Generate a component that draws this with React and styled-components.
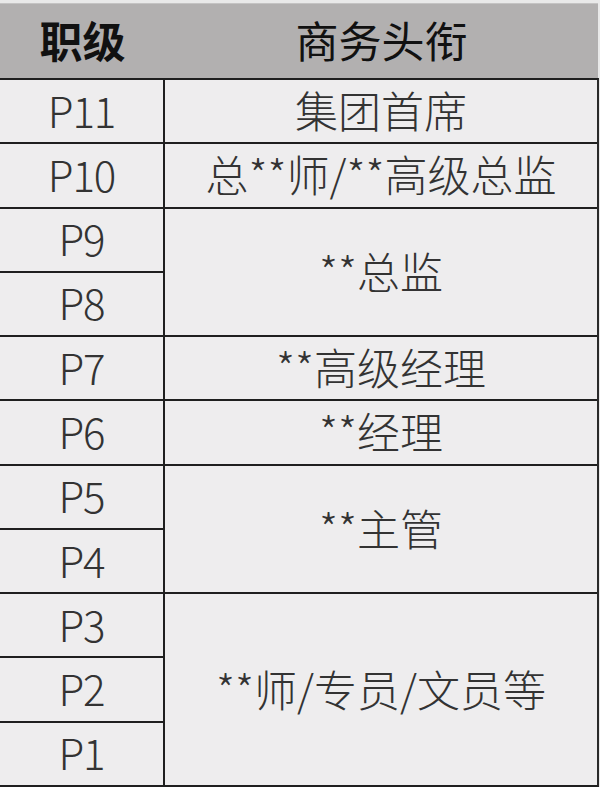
import styled, { createGlobalStyle } from "styled-components";

const GlobalStyle = createGlobalStyle`
  html, body {
    margin: 0;
    padding: 0;
    background: #ebebeb;
  }
  body {
    width: 600px;
    height: 787px;
    overflow: hidden;
    font-family: "Noto Sans CJK SC", sans-serif;
  }
`;

const Page = styled.div`
  width: 600px;
  height: 787px;
  display: flex;
  flex-direction: column;
  background: #e9e9e9;
`;

const Header = styled.div`
  display: grid;
  grid-template-columns: 165px 1fr;
  height: 74px;
  flex: none;
  margin-top: 3px;
  margin-right: 2px;
  background: #b2b0b0;
  border-top: 1px solid #c4c3c3;
`;

const HeadCell = styled.div`
  display: flex;
  align-items: center;
  justify-content: center;
  padding-bottom: 4px;
  font-family: "Noto Sans CJK SC", sans-serif;
  font-size: 43px;
  line-height: 1;
  font-weight: ${(p) => (p.$bold ? 700 : 400)};
  color: #111;
`;

const Body = styled.div`
  display: grid;
  grid-template-columns: 163px 1fr;
  grid-template-rows: repeat(11, minmax(0, 1fr));
  gap: 2px;
  height: 705px;
  flex: none;
  margin-right: 1px;
  background: #1f1f1f;
  border-top: 2px solid #1f1f1f;
  border-bottom: 2px solid #1f1f1f;
  border-right: 2px solid #2a2a2a;
`;

const Cell = styled.div`
  display: flex;
  align-items: center;
  justify-content: center;
  min-height: 0;
  background: #eeedee;
  font-family: "Noto Sans CJK SC", sans-serif;
  font-weight: 300;
  line-height: 1;
  color: #333;
  padding-bottom: 3px;
`;

const Level = styled(Cell)`
  grid-column: 1;
  font-size: 42px;
  letter-spacing: -1px;
`;

const Title = styled(Cell)`
  grid-column: 2;
  font-size: 43px;
`;

const rows = [
  { levels: ["P11"], title: "集团首席" },
  { levels: ["P10"], title: "总**师/**高级总监" },
  { levels: ["P9", "P8"], title: "**总监" },
  { levels: ["P7"], title: "**高级经理" },
  { levels: ["P6"], title: "**经理" },
  { levels: ["P5", "P4"], title: "**主管" },
  { levels: ["P3", "P2", "P1"], title: "**师/专员/文员等" },
];

export default function App() {
  let start = 1;
  const cells = [];
  rows.forEach((r) => {
    r.levels.forEach((lv, i) => {
      cells.push(
        <Level key={lv} style={{ gridRow: start + i }}>
          {lv}
        </Level>
      );
    });
    cells.push(
      <Title
        key={r.title}
        style={{ gridRow: `${start} / span ${r.levels.length}` }}
      >
        {r.title}
      </Title>
    );
    start += r.levels.length;
  });

  return (
    <>
      <GlobalStyle />
      <Page>
        <Header>
          <HeadCell $bold>职级</HeadCell>
          <HeadCell>商务头衔</HeadCell>
        </Header>
        <Body>{cells}</Body>
      </Page>
    </>
  );
}
